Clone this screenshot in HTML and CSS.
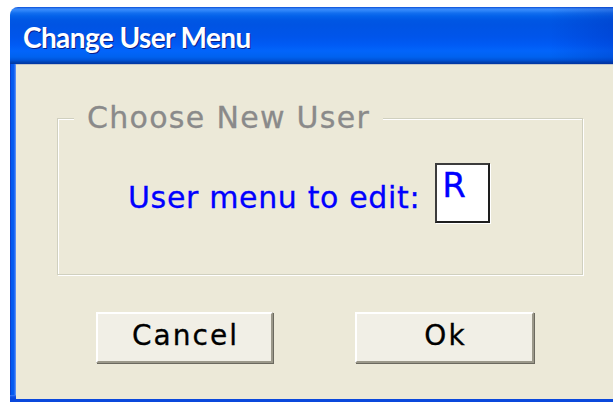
FILE: index.html
```html
<!DOCTYPE html>
<html lang="en">
<head>
<meta charset="utf-8">
<title>Change User Menu</title>
<link rel="stylesheet" href="styles.css">
</head>
<body>
<div class="window">
  <div class="titlebar"><span class="title">Change User Menu</span></div>
  <div class="frame">
    <div class="client">
      <fieldset class="group">
        <legend class="group-title">Choose New User</legend>
        <div class="field-row">
          <label class="field-label" for="user-menu">User menu to edit:</label>
          <div class="textbox" id="user-menu">R</div>
        </div>
      </fieldset>
      <div class="buttons">
        <button class="btn btn-cancel" type="button">Cancel</button>
        <button class="btn btn-ok" type="button">Ok</button>
      </div>
    </div>
  </div>
</div>
</body>
</html>
```
FILE: styles.css
```css
html, body {
  margin: 0;
  padding: 0;
  background: #ffffff;
  overflow: hidden;
}

body {
  width: 613px;
  height: 402px;
}

.window {
  margin: 7px 0 0 10px;
  width: 620px;
  height: 395px;
  display: flex;
  flex-direction: column;
}

/* Luna-style caption bar */
.titlebar {
  height: 57px;
  flex: none;
  border-radius: 8px 8px 0 0;
  background:
    linear-gradient(to right, rgba(0, 30, 160, 0) 0, rgba(0, 30, 160, 0) 540px, rgba(0, 30, 160, 0.22) 600px),
    linear-gradient(to bottom,
      #0a4fd8 0,
      #3d8cfa 2px,
      #2a82f8 4px,
      #136fef 6px,
      #0462ea 9px,
      #0057e4 13px,
      #0054e3 18px,
      #0055eb 30px,
      #005bf5 38px,
      #0265fb 44px,
      #0062ef 50px,
      #0054da 53px,
      #0043b5 55px,
      #0035a0 57px);
}

.title {
  display: block;
  padding: 13px 0 0 13px;
  line-height: 34px;
  font-family: Lato, "Open Sans", sans-serif;
  font-weight: 700;
  font-size: 28px;
  letter-spacing: -0.6px;
  color: #ffffff;
  text-shadow: 1px 1px 0 #0a1e8a;
}

/* blue window edge on the left and bottom */
.frame {
  flex: 1;
  display: flex;
  padding: 0 0 3px 6px;
  background:
    linear-gradient(to bottom, transparent 0, transparent 331px, #4a86f2 331px, #1a5cec 332px, #0a48dc 334px),
    linear-gradient(to right, #0a3fd0 0, #0a3fd0 1px, #0058f0 1px, #0a5cf0 4px, #3c7cf4 5px, #6f9cf6 6px);
}

.client {
  flex: 1;
  background: #ece9d8;
  border-top: 1px solid #c3c6c9;
  display: flex;
  flex-direction: column;
  align-items: flex-start;
}

/* etched group frame */
.group {
  margin: 38px 0 0 41px;
  padding: 0;
  width: 526px;
  height: 172px;
  box-sizing: border-box;
  border: 1px solid #d0d0bf;
  box-shadow: inset 1px 1px 0 #ffffff, 1px 1px 0 #ffffff;
}

.group-title {
  margin-left: 16px;
  padding: 0 13px;
  background: #ece9d8;
  font-family: "DejaVu Sans", Verdana, sans-serif;
  font-size: 30px;
  line-height: 30px;
  letter-spacing: 1.3px;
  color: #8a8a8a;
  -webkit-text-stroke: 0.3px #8a8a8a;
}

.field-row {
  display: flex;
  align-items: center;
  margin: 30px 0 0 70px;
}

.field-label {
  padding-top: 8px;
  font-family: "DejaVu Sans", Verdana, sans-serif;
  font-size: 30px;
  letter-spacing: 0.65px;
  color: #0000ff;
  -webkit-text-stroke: 0.3px #0000ff;
}

.textbox {
  margin-left: 15px;
  width: 55px;
  height: 60px;
  box-sizing: border-box;
  padding: 3px 0 0 5px;
  background: #ffffff;
  border: 2px solid;
  border-color: #3c3c3c #1e1e1e #1e1e1e #3c3c3c;
  box-shadow: 1px 1px 0 #ffffff;
  font-family: "DejaVu Sans", Verdana, sans-serif;
  font-size: 34px;
  line-height: 34px;
  color: #0000ff;
  -webkit-text-stroke: 0.3px #0000ff;
}

.buttons {
  display: flex;
  gap: 82px;
  margin: 37px 0 0 80px;
}

.btn {
  height: 51px;
  box-sizing: border-box;
  padding: 0 0 4px 2px;
  background: #f1efe6;
  border-style: solid;
  border-width: 2px;
  border-color: #ffffff #9b988a #9b988a #ffffff;
  box-shadow: 1px 1px 0 #6b695f;
  font-family: "DejaVu Sans", Verdana, sans-serif;
  font-size: 28px;
  letter-spacing: 2px;
  color: #000000;
  -webkit-text-stroke: 0.3px #000000;
  cursor: default;
}

.btn-cancel {
  width: 177px;
}

.btn-ok {
  width: 179px;
}
```
